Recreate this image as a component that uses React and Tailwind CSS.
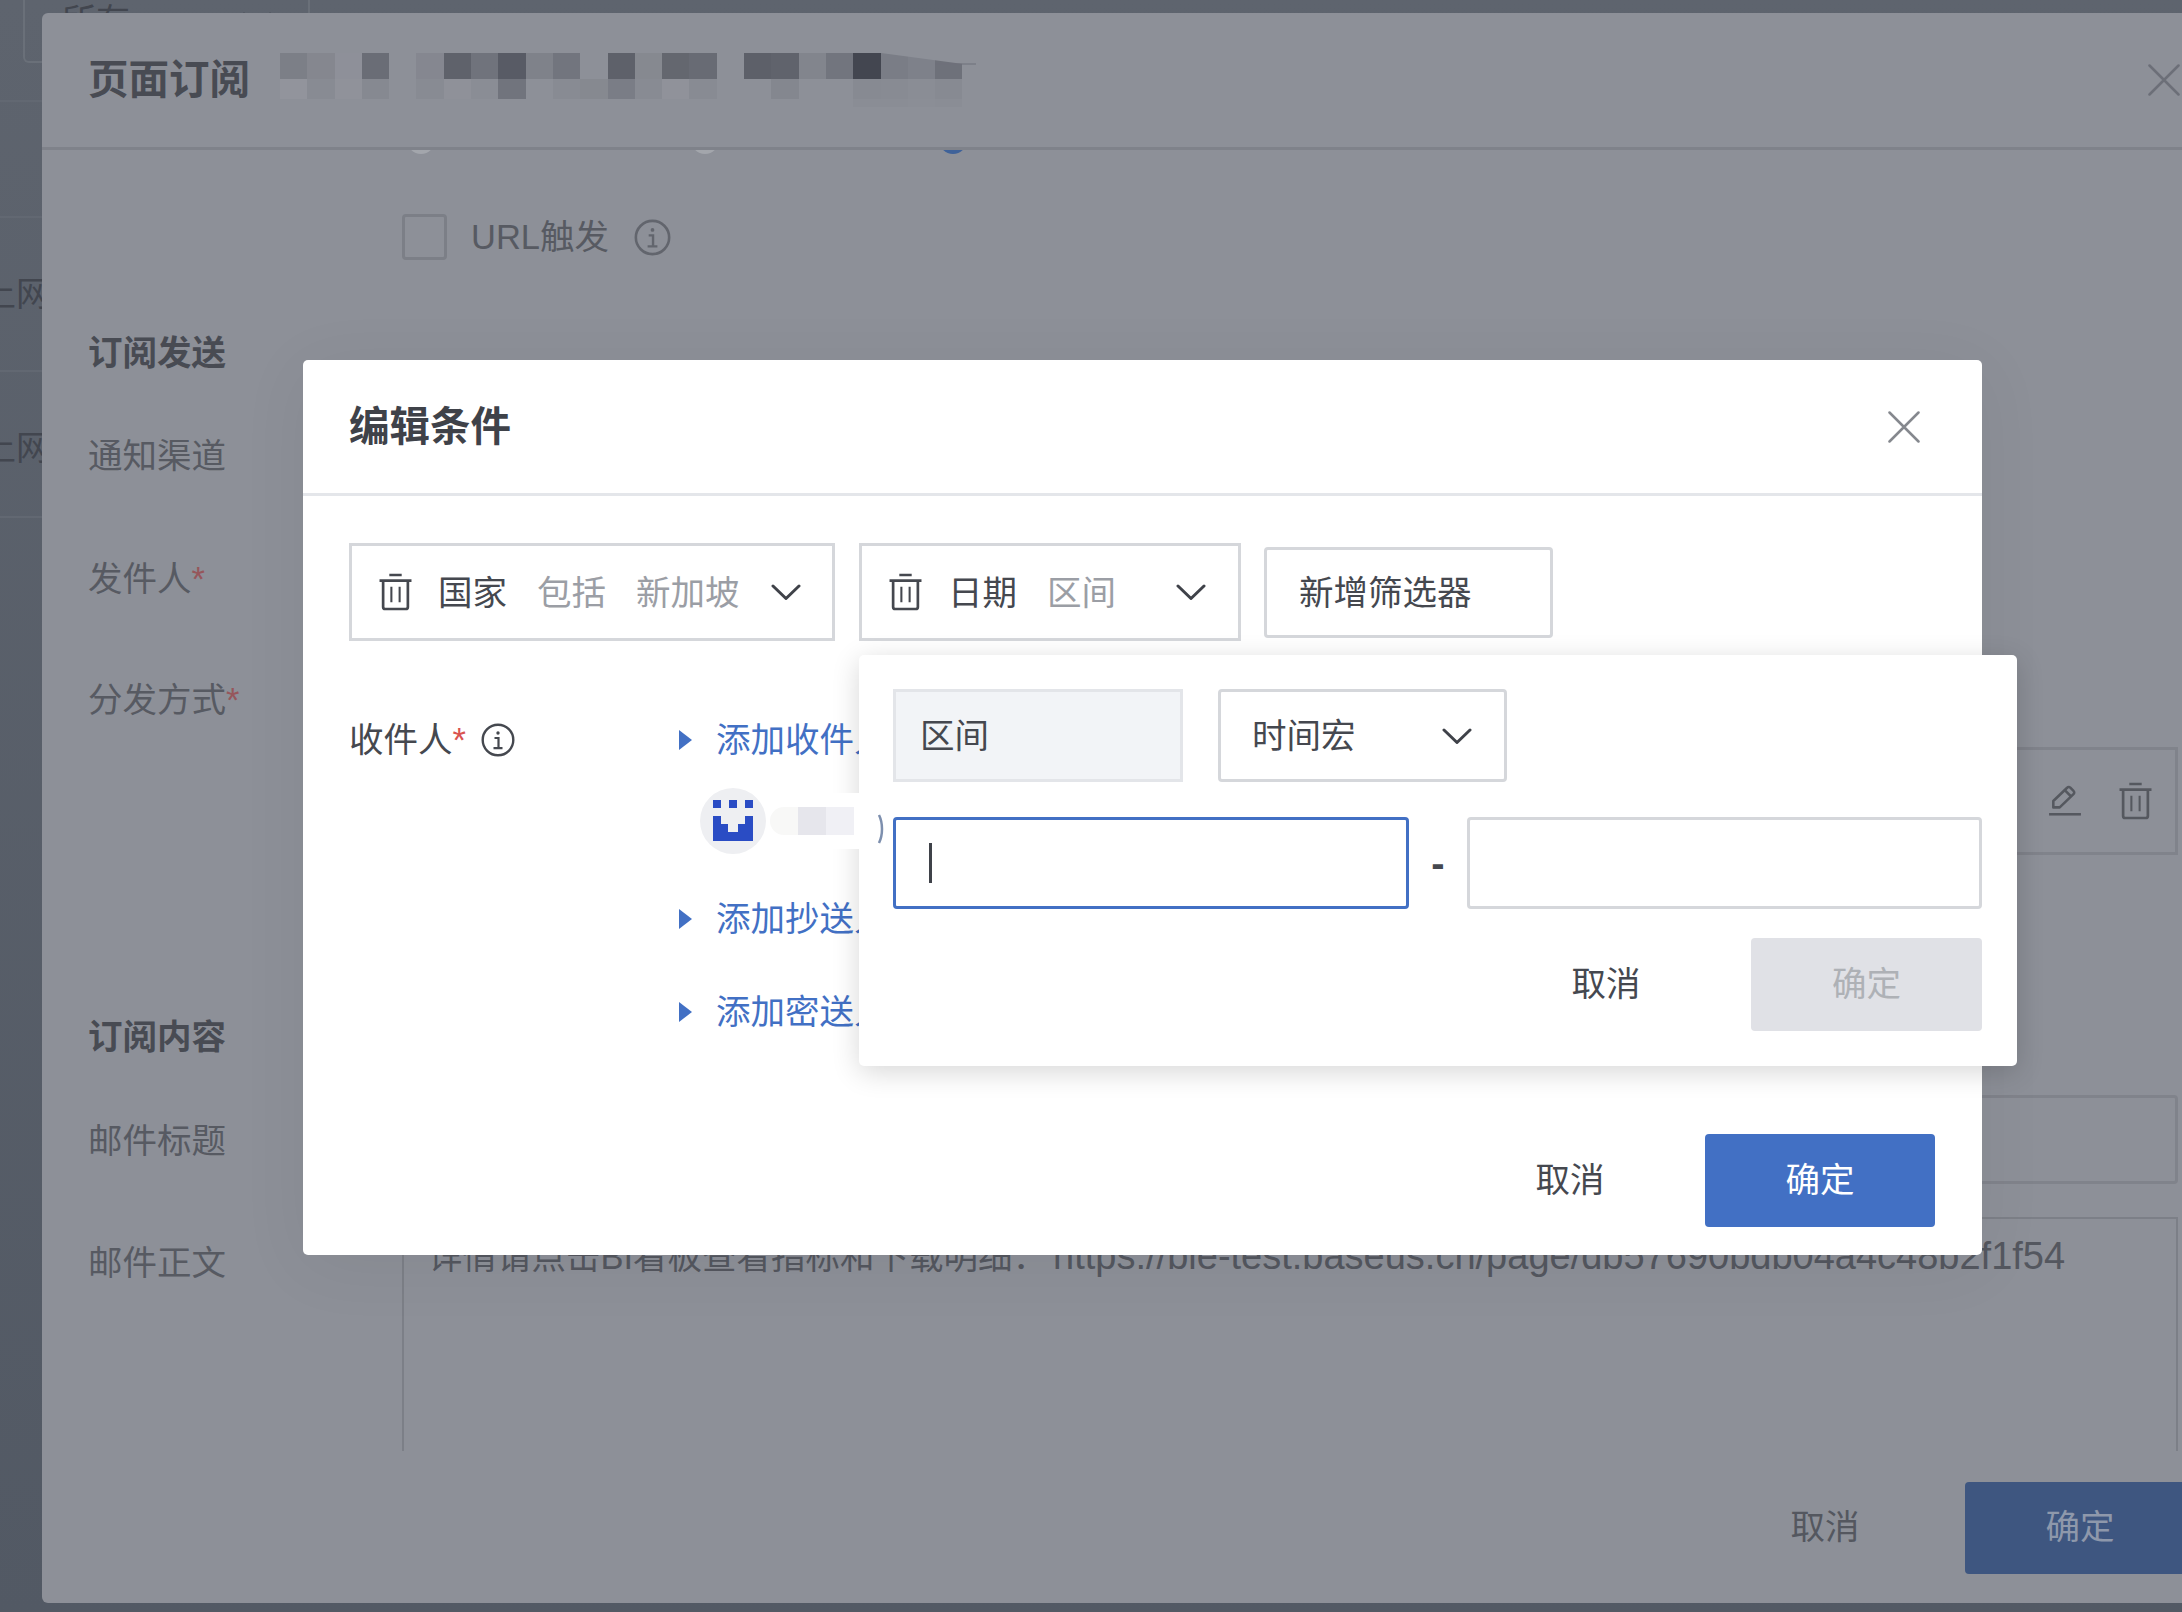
import React from 'react';

const FONT = "font-['Liberation_Sans','Noto_Sans_CJK_SC',sans-serif]";

const MOSAIC_TOP = ['#7c7f87', '#85878f', '#8e9099', '#6a6d76', '', '#858790', '#5f626b', '#70737c', '#585b65', '#7f828a', '#72757e', '', '#5e616a', '#868990', '#64676f', '#686b74', '', '#5d6069', '#60636c', '#82858d', '#72757e', '#434650', '#7a7d86', '#7e818a', '#6e717a'];
const MOSAIC_MID = ['#92949c', '#888b93', '#90929a', '#868991', '', '#888b93', '#8f9199', '#8a8d95', '#71747d', '', '#888b93', '#868990', '#7a7d86', '#888b93', '#90929a', '#888b93', '', '', '#84878f', '', '', '#878a92', '#888b93', '#8a8d95', '#878a92'];
const MOSAIC_LOW = ['', '', '', '', '', '', '', '', '', '', '', '', '', '', '', '', '', '', '', '', '', '#8a8d95', '#8a8d95', '#8b8e96', '#8a8d95'];

function MosaicRow({ cells, height }) {
  return (
    <div className="flex" style={{ height }}>
      {cells.map((c, i) => (
        <div key={i} className="w-[27.3px] shrink-0" style={{ backgroundColor: c || 'transparent' }} />
      ))}
    </div>
  );
}

function CloseIcon({ color, size = 32, width = 2.5 }) {
  return (
    <svg width={size} height={size} viewBox="0 0 32 32" fill="none" stroke={color} strokeWidth={width} strokeLinecap="round">
      <path d="M1.5 1.5 30.5 30.5M30.5 1.5 1.5 30.5" />
    </svg>
  );
}

function Chevron({ color = '#3f4249' }) {
  return (
    <svg width="30" height="16" viewBox="0 0 30 16" fill="none" stroke={color} strokeWidth="3" strokeLinecap="round" strokeLinejoin="round">
      <path d="M2 2 15 14.5 28 2" />
    </svg>
  );
}

function TrashIcon({ color = '#45484f' }) {
  return (
    <svg width="33" height="38" viewBox="0 0 32 36" fill="none" stroke={color} strokeWidth="2.6">
      <path d="M10 1.5h12M0.5 7h31M4 7v25.5a2 2 0 0 0 2 2h20a2 2 0 0 0 2-2V7" />
      <path d="M12 13v15M20 13v15" strokeWidth="2" />
    </svg>
  );
}

function PencilIcon({ color }) {
  return (
    <svg width="34" height="32" viewBox="0 0 32 30" fill="none" stroke={color} strokeWidth="2.4" strokeLinejoin="round">
      <path d="M5 21V15L18 2.5a2 2 0 0 1 3 0l3 3a2 2 0 0 1 0 3L11 21Z" />
      <path d="M16 5l6 6" />
      <path d="M1 27.5h30" />
    </svg>
  );
}

function InfoIcon({ color, size = 34 }) {
  return (
    <svg width={size} height={size} viewBox="0 0 34 34" fill="none" stroke={color} strokeWidth="2.4">
      <circle cx="17" cy="17" r="15.3" />
      <circle cx="17" cy="10" r="1.7" fill={color} stroke="none" />
      <path d="M13.5 15H17.5V25M12.5 25.2H21.5" strokeWidth="2.2" />
    </svg>
  );
}

function DimLabel({ children, required, bold }) {
  return (
    <div className={`w-[314px] shrink-0 pt-[2px] text-[34.5px] leading-[40px] whitespace-nowrap ${bold ? 'font-bold text-[#484b53]' : 'text-[#575a62]'}`}>
      {children}
      {required && <span className="text-[#96565b]">*</span>}
    </div>
  );
}

function AddLink({ children }) {
  return (
    <div className="flex items-center h-[40px] text-[34.5px] leading-[40px] text-[#4270c4] whitespace-nowrap">
      <svg width="13" height="20" viewBox="0 0 13 20" className="mr-[24px] shrink-0">
        <path d="M0 0 13 10 0 20Z" fill="#4270c4" />
      </svg>
      {children}
    </div>
  );
}

function Filter({ width, name, op, value, chevronGap }) {
  return (
    <div className={`flex items-center h-[98px] border-[3px] border-[#d5d7db] text-[34.5px] leading-[40px] whitespace-nowrap pl-[27px] ${width}`}>
      <TrashIcon />
      <span className="ml-[26px] pt-[2px] text-[#45484f]">{name}</span>
      <span className="ml-[30px] pt-[2px] text-[#9b9ea5]">{op}</span>
      {value && <span className="ml-[30px] pt-[2px] text-[#9b9ea5]">{value}</span>}
      <span className={chevronGap}><Chevron /></span>
    </div>
  );
}

export default function App() {
  return (
    <div className={`relative w-[2182px] h-[1612px] overflow-hidden bg-linear-to-b from-[#5e646e] to-[#525964] ${FONT}`}>
      {/* page behind the dialogs, only the left edge shows */}
      <div className="w-[42px] overflow-visible text-[34px] leading-[40px] text-[#42464f]">
        <div className="flex items-center justify-between w-[287px] h-[63px] ml-[23px] pl-[37px] pr-[36px] border-x-2 border-b-2 border-[#6a7079] rounded-bl-md whitespace-nowrap">
          <span className="-mt-[20px]">所有</span>
          <span className="-mt-[22px]"><Chevron color="#42464f" /></span>
        </div>
        <div className="w-[42px] overflow-hidden">
          <div className="h-[39px] border-b-2 border-[#626872]" />
          <div className="h-[116px] border-b-2 border-[#626872]" />
          <div className="flex items-center h-[154px] -ml-[18px] border-b-2 border-[#626872] whitespace-nowrap">上网</div>
          <div className="flex items-center h-[146px] -ml-[18px] border-b-2 border-[#626872] pt-[8px] whitespace-nowrap">上网</div>
        </div>
      </div>

      {/* outer dialog */}
      <div className="absolute left-[42px] top-[13px] w-[2200px] h-[1590px] flex flex-col rounded-[6px] bg-[#8d9098]">
        <div className="flex items-center justify-between h-[137px] pl-[46px] pr-[62px] border-b-[3px] border-[#7f828a] shrink-0">
          <div className="flex items-center">
            <h2 className="w-[161px] text-[40.5px] leading-[48px] font-bold text-[#484b53] whitespace-nowrap">页面订阅</h2>
            <div className="relative ml-[31px]">
              <MosaicRow cells={MOSAIC_TOP} height={26} />
              <MosaicRow cells={MOSAIC_MID} height={20} />
              <MosaicRow cells={MOSAIC_LOW} height={8} />
              <svg width="700" height="14" className="absolute left-0 top-0">
                <path d="M601 0H683V11Z" fill="#8d9098" />
                <path d="M655 11H696" stroke="#6e717a" strokeWidth="1.2" />
              </svg>
            </div>
          </div>
          <CloseIcon color="#6c6f78" />
        </div>

        <div className="h-[1301px] shrink-0 overflow-hidden">
          <div className="flex h-[4px] overflow-hidden ml-[365px]">
            <div className="w-[28px] h-[28px] -mt-[24px] rounded-full bg-[#a3a6ac]" />
            <div className="w-[28px] h-[28px] -mt-[24px] ml-[256px] rounded-full bg-[#a3a6ac]" />
            <div className="w-[28px] h-[28px] -mt-[24px] ml-[220px] rounded-full bg-[#3f6299]" />
          </div>

          <div className="flex items-center h-[46px] mt-[60px] ml-[360px] text-[34.5px] leading-[40px] text-[#575a62]">
            <div className="w-[45px] h-[46px] border-[3px] border-[#7c7f87] rounded-[4px]" />
            <span className="ml-[24px] whitespace-nowrap">URL触发</span>
            <span className="ml-[25px]"><InfoIcon color="#62656d" size={37} /></span>
          </div>

          <div className="flex items-center h-[40px] mt-[72px] pl-[46px]"><DimLabel bold>订阅发送</DimLabel></div>
          <div className="flex items-center h-[40px] mt-[63px] pl-[46px]"><DimLabel>通知渠道</DimLabel></div>
          <div className="flex items-center h-[40px] mt-[83px] pl-[46px]"><DimLabel required>发件人</DimLabel></div>
          <div className="flex items-center h-[40px] mt-[81px] pl-[46px]"><DimLabel required>分发方式</DimLabel></div>

          <div className="flex items-center justify-end w-[1776px] h-[108px] mt-[28px] ml-[360px] pr-[23px] border-[3px] border-[#80838b] gap-[37px]">
            <PencilIcon color="#55585f" />
            <TrashIcon color="#55585f" />
          </div>

          <div className="flex items-center h-[40px] mt-[161px] pl-[46px]"><DimLabel bold>订阅内容</DimLabel></div>

          <div className="flex items-center h-[89px] mt-[39px] pl-[46px]">
            <DimLabel>邮件标题</DimLabel>
            <div className="w-[1776px] h-full border-[3px] border-[#80838b] rounded-[4px]" />
          </div>

          <div className="flex mt-[33px] pl-[46px]">
            <div className="pt-[24px]"><DimLabel>邮件正文</DimLabel></div>
            <div className="w-[1776px] h-[260px] border-2 border-[#7c7f87] pt-[17px] pl-[24px] text-[34.5px] leading-[40px] text-[#54575f] whitespace-nowrap overflow-hidden">
              详情请点击BI看板查看指标和下载明细：<span className="ml-[6px] text-[38px]">https://bie-test.baseus.cn/page/db57690bdb04a4c48b2f1f54</span>
            </div>
          </div>
        </div>

        <div className="flex items-center justify-end pt-[31px] pr-[47px] text-[34.5px] leading-[40px]">
          <button className="w-[130px] pb-[2px] text-[#54575f]">取消</button>
          <button className="w-[230px] h-[92px] ml-[75px] pb-[2px] rounded-[4px] bg-[#3e5680] text-[#8e98ab]">确定</button>
        </div>
      </div>

      {/* edit condition dialog */}
      <div className="absolute left-[303px] top-[360px] w-[1679px] h-[895px] flex flex-col rounded-[5px] bg-white shadow-[0_10px_70px_rgba(0,0,0,0.06)]">
        <div className="flex items-center justify-between h-[136px] shrink-0 pl-[46px] pr-[62px] border-b-[3px] border-[#e4e6ea]">
          <h3 className="text-[40.5px] leading-[48px] font-bold text-[#3f4249]">编辑条件</h3>
          <CloseIcon color="#85888e" />
        </div>

        <div className="flex items-center gap-[23px] mt-[47px] ml-[46px]">
          <Filter width="w-[486px]" name="国家" op="包括" value="新加坡" chevronGap="ml-[31px]" />
          <Filter width="w-[382px] ml-[1px]" name="日期" op="区间" chevronGap="ml-[60px]" />
          <button className="w-[289px] h-[91px] pl-[32px] pt-[2px] border-[3px] border-[#d5d7db] rounded-[4px] text-left text-[34.5px] leading-[40px] text-[#45484f] whitespace-nowrap">新增筛选器</button>
        </div>

        <div className="flex items-center h-[40px] mt-[79px] ml-[46px] text-[34.5px] leading-[40px] text-[#45484f] whitespace-nowrap">
          <div className="flex items-center w-[330px] shrink-0">
            收件人<span className="text-[#d9534f]">*</span>
            <span className="ml-[15px]"><InfoIcon color="#45484f" /></span>
          </div>
          <AddLink>添加收件人</AddLink>
        </div>

        <div className="relative z-10 flex items-center h-[66px] mt-[28px] ml-[397px]">
          <div className="flex items-center justify-center w-[66px] h-[66px] rounded-full bg-[#eeeff2]">
            <svg width="42" height="42" viewBox="0 0 42 42">
              <path d="M0 0h8v8H0ZM16 0h8v8h-8ZM32 0h8v8h-8Z" fill="#2a4cc4" transform="translate(1 0)" />
              <path d="M1 16h8v8h7v8h10v-8h7v-8h8v25H1Z" fill="#2a4cc4" />
            </svg>
          </div>
          <div className="flex items-center w-[93px] h-[56px] bg-white">
            <div className="w-[28px] h-[28px] ml-[4px] rounded-l-full bg-[#f8f8f7]" />
            <div className="w-[28px] h-[28px] bg-[#e6e6ec]" />
            <div className="w-[28px] h-[28px] bg-[#f0f0f5]" />
          </div>
        </div>

        <div className="mt-[45px] ml-[376px]"><AddLink>添加抄送人</AddLink></div>
        <div className="mt-[53px] ml-[376px]"><AddLink>添加密送人</AddLink></div>

        <div className="flex items-center justify-end mt-auto mb-[28px] mr-[47px] text-[34.5px] leading-[40px]">
          <button className="w-[130px] pb-[2px] text-[#45484f]">取消</button>
          <button className="w-[230px] h-[93px] ml-[70px] pb-[2px] rounded-[4px] bg-[#4270c4] text-white">确定</button>
        </div>

        {/* range popover */}
        <div className="absolute left-[556px] top-[295px] w-[1158px] h-[411px] p-[34px] rounded-[5px] bg-white shadow-[0_6px_28px_rgba(0,0,0,0.16)] text-[34.5px] leading-[40px] text-[#45484f]">
          <svg width="8" height="30" viewBox="0 0 8 30" className="absolute left-[18px] top-[159px]" fill="none" stroke="#7d8fae" strokeWidth="2.5">
            <path d="M2 1C6 9 6 21 2 29" />
          </svg>
          <div className="flex items-center gap-[35px]">
            <div className="flex items-center w-[290px] h-[93px] pl-[24px] border-[3px] border-[#e3e5e9] bg-[#f2f4f7]">区间</div>
            <div className="flex items-center justify-between w-[289px] h-[93px] pl-[31px] pr-[32px] border-[3px] border-[#d5d7db] rounded-[4px]">
              时间宏
              <Chevron />
            </div>
          </div>
          <div className="flex items-center mt-[35px]">
            <div className="flex items-center w-[516px] h-[92px] pl-[33px] border-[3px] border-[#4270c4] rounded-[4px]">
              <div className="w-[3px] h-[40px] bg-[#3f4249]" />
            </div>
            <span className="w-[58px] text-center text-[40px] font-bold">-</span>
            <div className="w-[515px] h-[92px] border-[3px] border-[#d5d7db] rounded-[4px]" />
          </div>
          <div className="flex items-center justify-end mt-[29px] mr-[1px]">
            <button className="w-[130px] pb-[2px]">取消</button>
            <button className="w-[231px] h-[93px] ml-[80px] pb-[2px] rounded-[4px] bg-[#e0e1e6] text-[#aeb1b6]">确定</button>
          </div>
        </div>
      </div>
    </div>
  );
}
